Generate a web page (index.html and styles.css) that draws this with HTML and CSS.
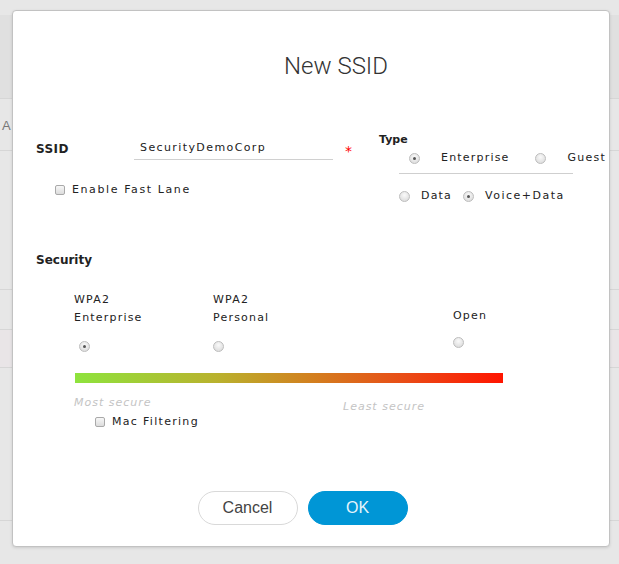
FILE: index.html
```html
<!DOCTYPE html>
<html lang="en">
<head>
    <meta charset="UTF-8">
    <meta name="viewport" content="width=device-width, initial-scale=1.0">
    <title>New SSID</title>
    <link rel="stylesheet" href="styles.css">
</head>
<body>
    <!-- table behind the dialog -->
    <div class="page">
        <div class="row row-gap"></div>
        <div class="row row-head"></div>
        <div class="row row-a"><span class="cell-a">A</span></div>
        <div class="row row-b"></div>
        <div class="row row-c"></div>
        <div class="row row-sel"></div>
        <div class="row row-d"></div>
    </div>

    <div class="modal">
        <h1 class="modal-title">New SSID</h1>

        <div class="top-row">
            <div class="left-col">
                <div class="ssid-row">
                    <label class="field-label" for="ssid">SSID</label>
                    <input type="text" id="ssid" class="ssid-input" value="SecurityDemoCorp">
                    <span class="required">*</span>
                </div>
                <div class="check-row fast-lane">
                    <span class="checkbox"></span>
                    <span>Enable Fast Lane</span>
                </div>
            </div>

            <div class="type-col">
                <div class="type-label">Type</div>
                <div class="type-row">
                    <span class="radio checked gap-wide"></span>
                    <span class="opt-text">Enterprise</span>
                    <span class="radio gap-wide guest-radio"></span>
                    <span class="opt-text">Guest</span>
                </div>
                <div class="divider"></div>
                <div class="type-row data-row">
                    <span class="radio gap-small"></span>
                    <span class="opt-text">Data</span>
                    <span class="radio checked gap-small voice-radio"></span>
                    <span class="opt-text voice">Voice+Data</span>
                </div>
            </div>
        </div>

        <div class="section-label">Security</div>

        <div class="sec-options">
            <div class="sec-opt">
                <div class="sec-name">WPA2<br>Enterprise</div>
                <span class="radio checked first-radio"></span>
            </div>
            <div class="sec-opt">
                <div class="sec-name">WPA2<br>Personal</div>
                <span class="radio"></span>
            </div>
            <div class="sec-opt open">
                <div class="sec-name">Open</div>
                <span class="radio"></span>
            </div>
        </div>

        <div class="sec-bar"></div>

        <div class="sec-hints">
            <span class="hint most">Most secure</span>
            <span class="hint least">Least secure</span>
        </div>

        <div class="check-row mac">
            <span class="checkbox"></span>
            <span>Mac Filtering</span>
        </div>

        <div class="modal-footer">
            <button class="btn btn-cancel">Cancel</button>
            <button class="btn btn-ok">OK</button>
        </div>
    </div>
</body>
</html>
```

FILE: styles.css
```css
* { margin: 0; padding: 0; box-sizing: border-box; }
body {
    font-family: "DejaVu Sans", Verdana, sans-serif;
    font-size: 11px;
    color: #222;
    background: #e7e7e7;
    width: 619px;
    height: 564px;
    overflow: hidden;
}

/* background table */
.page { display: flex; flex-direction: column; }
.row { border-bottom: 1px solid #d6d6d6; }
.row-gap { height: 15px; border-bottom: none; }
.row-head { height: 84px; background: #e0e0e0; }
.row-a { height: 52px; padding: 19px 0 0 2px; }
.cell-a { font-family: "Liberation Sans", Arial, sans-serif; font-size: 13px; color: #777; }
.row-b { height: 139px; }
.row-c { height: 40px; }
.row-sel { height: 38px; background: #e9e5e7; }
.row-d { height: 153px; }

/* dialog */
.modal {
    position: absolute;
    left: 12px;
    top: 10px;
    width: 598px;
    height: 537px;
    background: #fff;
    border: 1px solid #c2c2c2;
    border-radius: 4px;
    box-shadow: 0 1px 3px rgba(0, 0, 0, 0.12);
    padding-left: 23px;
}
.modal-title {
    font-family: Roboto, "Liberation Sans", sans-serif;
    font-weight: 300;
    font-size: 24px;
    line-height: 28px;
    color: #333;
    text-align: center;
    padding: 41px 0 0 27px;
}

.top-row { display: flex; margin-top: 53px; }
.left-col { width: 343px; }
.ssid-row { display: flex; align-items: center; margin-top: 4px; }
.field-label {
    width: 98px;
    font-weight: bold;
    font-size: 12px;
    letter-spacing: 0.4px;
}
.ssid-input {
    width: 199px;
    height: 23px;
    border: none;
    border-bottom: 1px solid #d0d0d0;
    padding: 0 0 2px 6px;
    font-family: "DejaVu Sans", Verdana, sans-serif;
    font-size: 11px;
    letter-spacing: 1.4px;
    color: #222;
    outline: none;
}
.required { color: #f00; font-size: 14px; margin-left: 12px; padding-top: 4px; }

.check-row { display: flex; align-items: center; line-height: 14px; letter-spacing: 1.3px; }
.fast-lane { margin: 23px 0 0 19px; letter-spacing: 1.6px; }
.checkbox {
    width: 10px;
    height: 10px;
    border: 1px solid #a9a9a9;
    border-radius: 2px;
    background: linear-gradient(#f7f7f7, #dcdcdc);
    margin-right: 7px;
}

.type-col { flex: 1; }
.type-label { font-weight: bold; font-size: 11px; line-height: 14px; }
.type-row {
    display: flex;
    align-items: center;
    line-height: 14px;
    margin-top: 4px;
    padding-left: 30px;
    white-space: nowrap;
}
.opt-text { letter-spacing: 1.2px; }
.opt-text.voice { letter-spacing: 1.5px; }
.divider { width: 174px; margin: 8px 0 0 20px; border-top: 1px solid #cfcfcf; }
.data-row { margin-top: 15px; padding-left: 20px; }

.radio {
    display: inline-block;
    width: 11px;
    height: 11px;
    border: 1px solid #bdbdbd;
    border-radius: 50%;
    background: radial-gradient(circle at 50% 35%, #fafafa, #d6d6d6);
    position: relative;
    flex-shrink: 0;
}
.radio.checked::after {
    content: "";
    position: absolute;
    left: 3px;
    top: 3px;
    width: 3px;
    height: 3px;
    border-radius: 50%;
    background: #555;
}
.gap-wide { margin-right: 21px; }
.guest-radio { margin-left: 25px; margin-right: 22px; }
.gap-small { margin-right: 11px; }
.voice-radio { margin-left: 11px; }

.section-label {
    font-weight: bold;
    font-size: 12px;
    line-height: 14px;
    margin-top: 50px;
}

.sec-options { display: flex; margin: 24px 0 0 38px; }
.sec-opt { display: flex; flex-direction: column; width: 139px; }
.sec-opt:nth-child(2) { width: 240px; }
.sec-name { line-height: 18px; letter-spacing: 1.2px; }
.sec-opt .radio { margin-top: 14px; }
.sec-opt .first-radio { margin-left: 5px; }
.sec-opt.open { margin-top: 16px; }
.sec-opt.open .radio { margin-top: 12px; }

.sec-bar {
    width: 428px;
    height: 10px;
    margin: 21px 0 0 39px;
    background: linear-gradient(to right, #8ee33d, #b9b22e 33%, #d2801f 55%, #ea4a16 78%, #ff1500);
}

.sec-hints { display: flex; margin: 13px 0 0 38px; align-items: flex-start; }
.hint {
    font-style: italic;
    color: #c4c4c4;
    line-height: 14px;
    letter-spacing: 1px;
}
.most { width: 269px; }
.least { margin-top: 4px; }

.mac { margin: 1px 0 0 59px; }

.modal-footer {
    display: flex;
    justify-content: center;
    gap: 10px;
    margin-top: 62px;
    padding-right: 40px;
}
.btn {
    width: 100px;
    height: 34px;
    border-radius: 17px;
    font-family: "Liberation Sans", Arial, sans-serif;
    font-size: 16px;
    cursor: pointer;
}
.btn-cancel { background: #fff; border: 1px solid #d9d9d9; color: #444; }
.btn-ok { background: #0096d6; border: 1px solid #0096d6; color: #e6f4fb; }
```
